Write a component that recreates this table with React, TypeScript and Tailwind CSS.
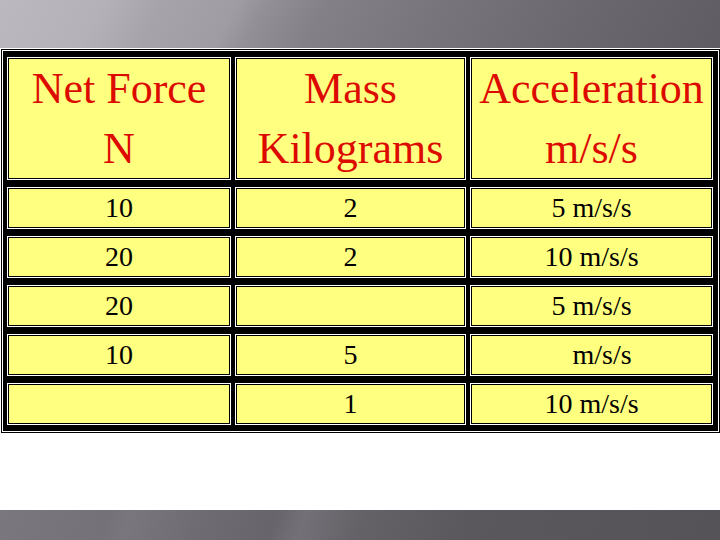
import type { ReactNode } from "react";

const headers = [
  ["Net Force", "N"],
  ["Mass", "Kilograms"],
  ["Acceleration", "m/s/s"],
];

// null = empty cell, "gap" = acceleration with the number left out
const rows: (string | null)[][] = [
  ["10", "2", "5 m/s/s"],
  ["20", "2", "10 m/s/s"],
  ["20", null, "5 m/s/s"],
  ["10", "5", "gap"],
  [null, "1", "10 m/s/s"],
];

const Cell = ({ children, tall }: { children?: ReactNode; tall?: boolean }) => (
  <div
    className={`flex flex-col items-center justify-center border border-black bg-[#ffff80] shadow-[0_0_0_1px_#ffffff] ${
      tall ? "h-[121px]" : "h-[40px]"
    }`}
  >
    {children}
  </div>
);

export default function App() {
  return (
    <div className="flex h-[540px] w-[720px] flex-col overflow-hidden bg-white [font-family:'Liberation_Serif','Times_New_Roman',serif]">
      <div className="h-[48px] shrink-0 bg-[linear-gradient(118deg,#bbb9bf_0%,#b4b2b8_14%,#a6a4aa_22%,#9f9da3_32%,#929096_36%,#838187_44%,#77757b_60%,#6a686e_80%,#5f5d63_100%)]" />

      <div className="ml-px mt-px border border-black">
        <div className="grid grid-cols-[222px_229px_1fr] gap-x-[6px] gap-y-[9px] border border-white bg-black pb-[7px] pl-[5px] pr-[6px] pt-[7px]">
          {headers.map(([a, b]) => (
            <Cell key={a} tall>
              <span className="text-[44px] leading-[60px] text-[#dd0a00]">{a}</span>
              <span className="text-[44px] leading-[60px] text-[#dd0a00]">{b}</span>
            </Cell>
          ))}
          {rows.map((row, r) =>
            row.map((v, c) => (
              <Cell key={`${r}-${c}`}>
                {v === "gap" ? (
                  <span className="text-[28px] leading-none text-black">
                    <span className="inline-block w-[0.5em]" /> m/s/s
                  </span>
                ) : v ? (
                  <span className="text-[28px] leading-none text-black">{v}</span>
                ) : null}
              </Cell>
            ))
          )}
        </div>
      </div>

      <div className="flex-1" />

      <div className="h-[30px] shrink-0 bg-[linear-gradient(110deg,#7a787e_0%,#747278_15%,#79777d_18%,#6e6c72_28%,#67656b_38%,#737177_42%,#646267_50%,#5a585d_65%,#555358_100%)]" />
    </div>
  );
}
